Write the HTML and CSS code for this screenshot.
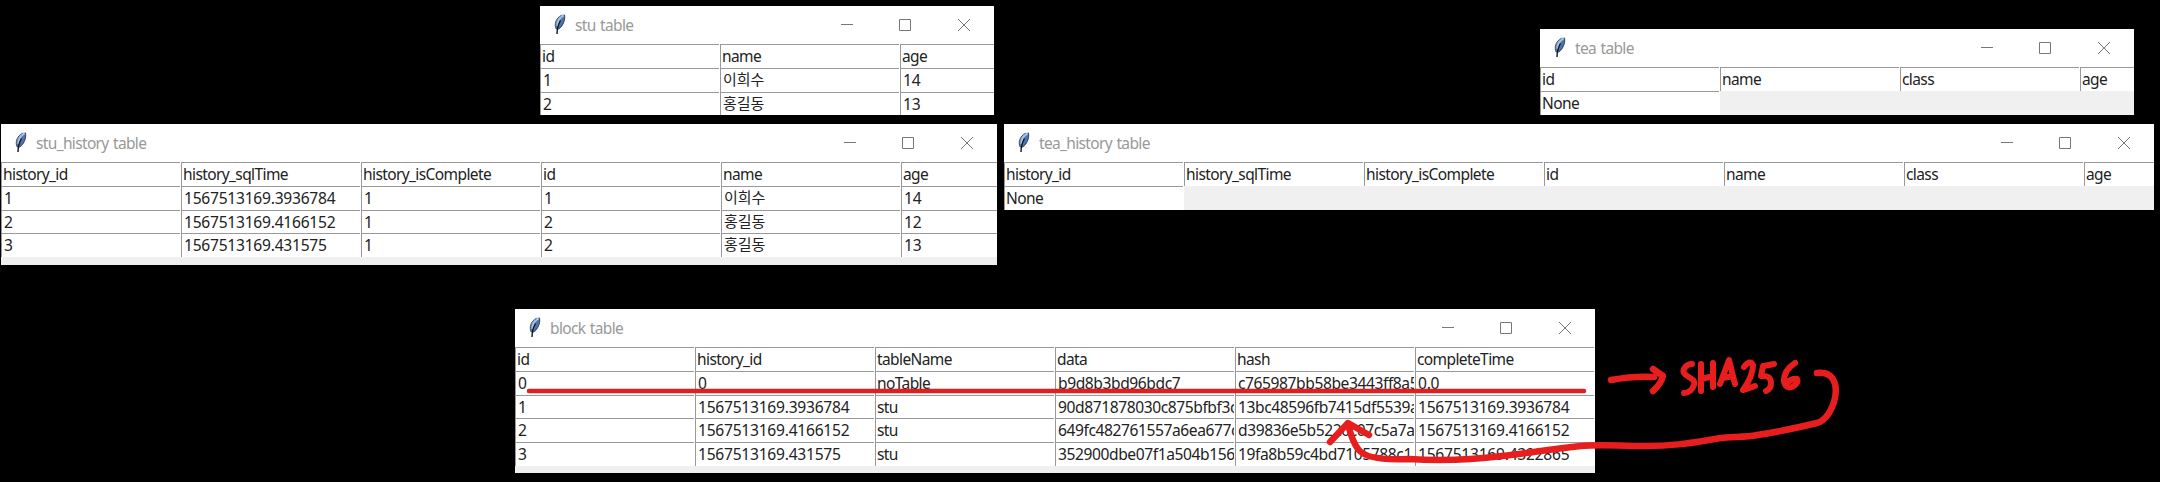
FILE: index.html
```
<!DOCTYPE html>
<html lang="ko"><head><meta charset="utf-8"><title>Tables</title><link rel="stylesheet" href="styles.css"></head>
<body>
<svg width="0" height="0" class="defs"><defs>
<symbol id="feather" viewBox="0 0 16 22"><path d="M4.3 16.5C2 12 4 4 12.5 1.2C14 6 11.5 13.5 6.5 16.5Z" fill="#4f75aa"/><path d="M5.500 13C5 9 7.500 4.500 11.500 2.200" fill="none" stroke="#a9c3e2" stroke-width="2.200"/><path d="M4.200 16C2 12 3.500 5 9.500 2.300M12.500 2C13.500 7 11 12.500 6.700 16" fill="none" stroke="#2b3d5e" stroke-width=".9"/><path d="M5 21C5 16 6.500 11 8.500 7.500" fill="none" stroke="#10151f" stroke-width="1.400"/></symbol>
<symbol id="controls" viewBox="0 0 130 14"><path d="M0 6.500H12M58.500 1.500H69.500V12.500H58.500ZM117 1L129 13M129 1L117 13" fill="none" stroke="#777" stroke-width="1"/></symbol>
</defs></svg>
<main class="desktop" id="desktop">
<svg class="ink" viewBox="0 0 2160 482">
<path d="M529 391H1584" stroke="#df2020" stroke-width="4.600"/>
<path d="M1611 380C1627 377 1640 376 1654 377M1653 369L1663 376Q1661 384 1653 391" stroke-width="6.500"/>
<path d="M1817 373C1832 371 1838 382 1835 398C1832 411 1825 421 1817 423C1796 428 1778 432 1757 435C1744 438 1730 436 1715 439C1690 443 1675 446 1645 446C1618 446 1601 444 1581 446C1550 449 1530 453 1502 456C1470 460 1440 461 1409 459Q1366 461 1358 449Q1352 441 1348 424M1330 442L1348 423L1369 435" stroke-width="6.500"/>
<path d="M1692 364C1686 364 1682 370 1684 373C1687 378 1696 378 1694 385Q1691 393 1684 393M1701 364V391M1713 363V387M1702 379L1713 376M1720 384L1729 360L1735 384M1723 378L1733 376M1744 367Q1750 359 1753 365Q1753 376 1743 390Q1750 388 1755 386M1763 366L1761 376Q1771 375 1771 383Q1771 389 1766 391M1764 366L1774 364M1795 363Q1783 371 1784 382Q1786 389 1792 387Q1799 383 1797 379Q1792 378 1787 383" stroke-width="6"/>
</svg>
</main>
<script src="tables.js"></script>
</body></html>
```
FILE: tables.js
```
const windows = [
  { key: 'stu', title: 'stu table', rows: [['id','name','age'],['1','이희수','14'],['2','홍길동','13']] },
  { key: 'tea', title: 'tea table', rows: [['id','name','class','age'],['None']] },
  { key: 'stu-history', title: 'stu_history table', rows: [['history_id','history_sqlTime','history_isComplete','id','name','age'],['1','1567513169.3936784','1','1','이희수','14'],['2','1567513169.4166152','1','2','홍길동','12'],['3','1567513169.431575','1','2','홍길동','13']] },
  { key: 'tea-history', title: 'tea_history table', rows: [['history_id','history_sqlTime','history_isComplete','id','name','class','age'],['None']] },
  { key: 'block', title: 'block table', rows: [['id','history_id','tableName','data','hash','completeTime'],['0','0','noTable','b9d8b3bd96bdc7','c765987bb58be3443ff8a5','0.0'],['1','1567513169.3936784','stu','90d871878030c875bfbf3c','13bc48596fb7415df5539a','1567513169.3936784'],['2','1567513169.4166152','stu','649fc482761557a6ea677c','d39836e5b5220c07c5a7a','1567513169.4166152'],['3','1567513169.431575','stu','352900dbe07f1a504b156','19fa8b59c4bd7105788c1','1567513169.4322865']] }
];
const kind = t => /[가-힣]/.test(t) ? 'korean' : /\d/.test(t) ? (/[a-f]/.test(t) ? 'value hex' : 'value') : 'label';
const row = r => '<div class="row">' + r.map(t => `<div class="cell ${kind(t)}">${t}</div>`).join('') + '</div>';
document.getElementById('desktop').insertAdjacentHTML('afterbegin', windows.map(w =>
  `<section class="window ${w.key}"><header class="titlebar"><svg class="feather"><use href="#feather"/></svg><span class="title">${w.title}</span><svg class="controls"><use href="#controls"/></svg></header><div class="grid">${w.rows.map(row).join('')}</div></section>`).join(''));
```
FILE: styles.css
```
*{box-sizing:border-box}
body{margin:0;background:#000;overflow:hidden}
.defs{position:absolute}
.desktop{position:relative;width:2160px;height:482px;font-family:"Noto Sans","Noto Sans CJK KR",sans-serif}
.window{position:absolute;background:#f0f0f0;overflow:hidden}
.stu{left:540px;top:6px;width:454px;height:109px}
.tea{left:1540px;top:29px;width:594px;height:86px}
.stu-history{left:1px;top:124px;width:996px;height:141px}
.tea-history{left:1004px;top:124px;width:1150px;height:86px}
.block{left:515px;top:309px;width:1080px;height:164px}
.titlebar{height:38px;display:flex;align-items:center;background:#fff;padding:0 23px 0 12px}
.feather{width:16px;height:22px;margin-right:7px;margin-top:-2px}
.title{font-size:15.500px;letter-spacing:-.65px;word-spacing:1px;line-height:20px;color:#999;flex:1;white-space:nowrap}
.controls{width:130px;height:14px}
.row{display:flex;height:23.800px}
.cell{flex:none;width:180px;background:#fff;border-left:1px solid #999;border-right:1px solid #fff;padding-left:2px;line-height:24px;color:#222;white-space:nowrap;overflow:hidden;box-shadow:inset 0 1px #999}
.label{font-size:15.500px;letter-spacing:-.6px;padding-left:1px;line-height:25px}
.value{font-size:15.600px;letter-spacing:-.25px}
.hex{letter-spacing:-.42px}
.korean{font-size:15px;line-height:23px}
.ink{position:absolute;inset:0;width:2160px;height:482px;fill:none;stroke:#e81e1e;stroke-linecap:round;stroke-linejoin:round}
```
